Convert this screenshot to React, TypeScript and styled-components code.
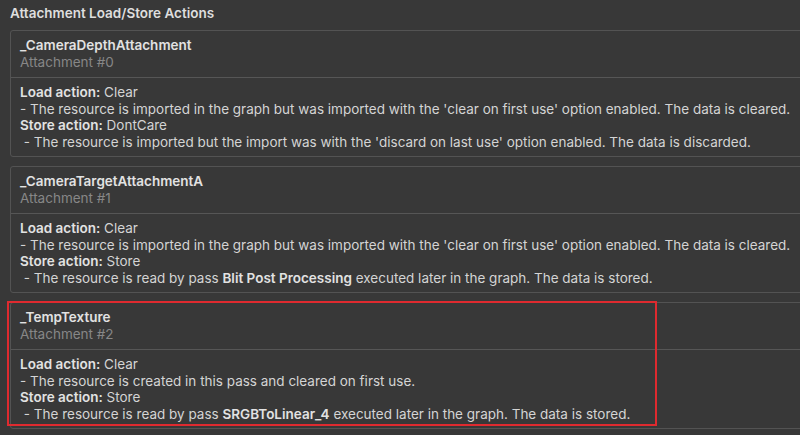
import React from 'react';
import styled, { createGlobalStyle } from 'styled-components';

const GlobalStyle = createGlobalStyle`
  html, body {
    margin: 0;
    padding: 0;
    background: #383838;
    overflow: hidden;
  }
  body {
    font-family: Inter, "Noto Sans", "Liberation Sans", sans-serif;
    font-size: 13.5px;
    color: #d4d4d4;
  }
`;

const Page = styled.div`
  width: 830px;
  padding: 4px 0 0 10px;
`;

const SectionTitle = styled.div`
  font-weight: 600;
  line-height: 18px;
  color: #dedede;
  margin-bottom: 8px;
`;

const CardList = styled.div`
  display: flex;
  flex-direction: column;
  gap: 9px;
`;

const CardWrap = styled.div`
  position: relative;
`;

const Card = styled.div`
  border: 1px solid #535353;
  border-radius: 3px;
  background: #383838;
`;

const CardHeader = styled.div`
  padding: 6px 9px;
  line-height: 17px;
  border-bottom: 1px solid #565656;
`;

const ResourceName = styled.div`
  font-weight: 600;
  color: #e2e2e2;
`;

const AttachmentIndex = styled.div`
  color: #878787;
`;

const CardBody = styled.div`
  padding: 6px 9px;
  line-height: 16.5px;
`;

const Line = styled.div`
  white-space: pre;
`;

const Strong = styled.span`
  font-weight: 600;
  color: #e2e2e2;
`;

const Highlight = styled.div`
  position: absolute;
  left: -3px;
  top: -1px;
  width: 650px;
  height: 125px;
  box-sizing: border-box;
  border: 2px solid #df2a2f;
  pointer-events: none;
`;

type Attachment = {
  name: string;
  index: number;
  load: string;
  loadReason: React.ReactNode;
  store: string;
  storeReason: React.ReactNode;
  highlighted?: boolean;
};

const attachments: Attachment[] = [
  {
    name: '_CameraDepthAttachment',
    index: 0,
    load: 'Clear',
    loadReason:
      "- The resource is imported in the graph but was imported with the 'clear on first use' option enabled. The data is cleared.",
    store: 'DontCare',
    storeReason:
      " - The resource is imported but the import was with the 'discard on last use' option enabled. The data is discarded.",
  },
  {
    name: '_CameraTargetAttachmentA',
    index: 1,
    load: 'Clear',
    loadReason:
      "- The resource is imported in the graph but was imported with the 'clear on first use' option enabled. The data is cleared.",
    store: 'Store',
    storeReason: (
      <>
        {' - The resource is read by pass '}
        <Strong>Blit Post Processing</Strong>
        {' executed later in the graph. The data is stored.'}
      </>
    ),
  },
  {
    name: '_TempTexture',
    index: 2,
    load: 'Clear',
    loadReason: '- The resource is created in this pass and cleared on first use.',
    store: 'Store',
    storeReason: (
      <>
        {' - The resource is read by pass '}
        <Strong>SRGBToLinear_4</Strong>
        {' executed later in the graph. The data is stored.'}
      </>
    ),
    highlighted: true,
  },
];

const App: React.FC = () => {
  return (
    <>
      <GlobalStyle />
      <Page>
        <SectionTitle>Attachment Load/Store Actions</SectionTitle>
        <CardList>
          {attachments.map((a) => (
            <CardWrap key={a.index}>
              <Card>
                <CardHeader>
                  <ResourceName>{a.name}</ResourceName>
                  <AttachmentIndex>Attachment #{a.index}</AttachmentIndex>
                </CardHeader>
                <CardBody>
                  <Line>
                    <Strong>Load action:</Strong> {a.load}
                  </Line>
                  <Line>{a.loadReason}</Line>
                  <Line>
                    <Strong>Store action:</Strong> {a.store}
                  </Line>
                  <Line>{a.storeReason}</Line>
                </CardBody>
              </Card>
              {a.highlighted && <Highlight />}
            </CardWrap>
          ))}
        </CardList>
      </Page>
    </>
  );
};

export default App;
